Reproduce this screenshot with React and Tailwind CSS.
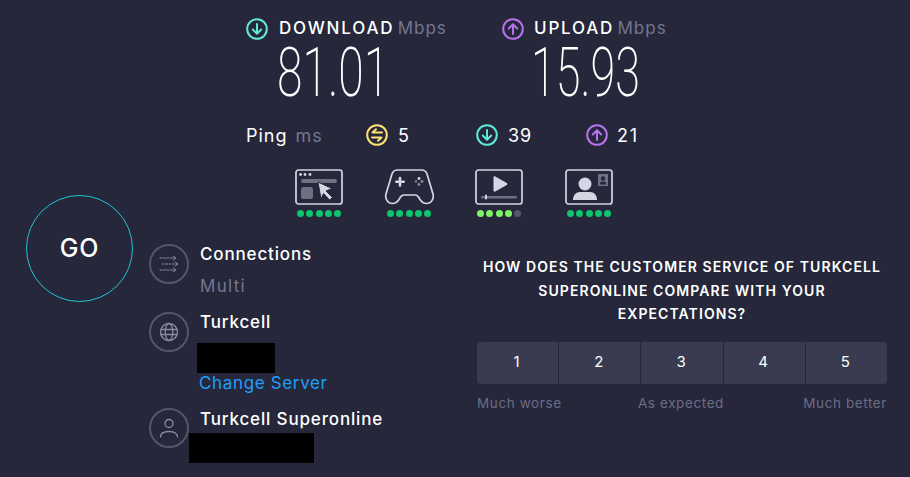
function ArrowCircle({ up, color, size = 22 }) {
	return (
		<svg width={size} height={size} viewBox="0 0 22 22" fill="none" stroke={color} strokeWidth="2" strokeLinecap="round" strokeLinejoin="round" className="shrink-0">
			<circle cx="11" cy="11" r="9.8" />
			{up ? <path d="M11 16V6.5M6.8 10.5 11 6.3l4.2 4.2" /> : <path d="M11 6v9.5M6.8 11.5l4.2 4.2 4.2-4.2" />}
		</svg>
	)
}

function PingIcon() {
	return (
		<svg width="22" height="22" viewBox="0 0 22 22" fill="none" stroke="#fde272" strokeWidth="2" strokeLinecap="round" strokeLinejoin="round" className="shrink-0">
			<circle cx="11" cy="11" r="9.8" />
			<path d="M16 8.5H6.5L10 5.2M6 13.5h9.5L12 16.8" />
		</svg>
	)
}

function WebIcon() {
	return (
		<svg width="48" height="36" viewBox="0 0 48 36" fill="none">
			<rect x="1" y="1" width="46" height="34" rx="2.5" stroke="#d5d6e4" strokeWidth="1.7" />
			<circle cx="5.5" cy="5.5" r="1.4" fill="#d5d6e4" />
			<circle cx="10" cy="5.5" r="1.4" fill="#d5d6e4" />
			<circle cx="15" cy="5.5" r="1.4" fill="#d5d6e4" />
			<rect x="6" y="10" width="36" height="4" rx="2" fill="#6f7082" />
			<rect x="6" y="18" width="12" height="12" rx="2.5" fill="#6f7082" />
			<path d="M23 13 37 19.500 31 22l6.500 6.500-3 2.500-6-6.500L26 30z" fill="#d5d6e4" stroke="#26273b" strokeWidth="1" />
		</svg>
	)
}

function GameIcon() {
	return (
		<svg width="50" height="36" viewBox="0 0 50 36" fill="none">
			<path d="M12.500 1h25c2.800 0 4.700 1.500 5.500 4l6 20c1.300 5-2 9.500-6.500 9.500-3 0-4.800-1.500-6.500-4l-1.500-2.500c-1-1.500-2-2-3.500-2h-11c-1.500 0-2.500.5-3.500 2l-1.500 2.500c-1.700 2.500-3.500 4-6.500 4-4.500 0-7.800-4.500-6.500-9.500l6-20c.8-2.500 2.700-4 5.500-4z" stroke="#d5d6e4" strokeWidth="1.7" />
			<path d="M16 9v7.500M12.300 12.700h7.400" stroke="#d5d6e4" strokeWidth="2.600" strokeLinecap="round" />
			<circle cx="35" cy="9.500" r="1.400" fill="#d5d6e4" />
			<circle cx="35" cy="15.500" r="1.400" fill="#8b8c9e" />
			<circle cx="32" cy="12.500" r="1.400" fill="#6f7082" />
			<circle cx="38" cy="12.500" r="1.400" fill="#8b8c9e" />
		</svg>
	)
}

function VideoIcon() {
	return (
		<svg width="48" height="36" viewBox="0 0 48 36" fill="none">
			<rect x="1" y="1" width="46" height="34" rx="2.500" stroke="#d5d6e4" strokeWidth="1.700" />
			<path d="M18.500 8.500c0-1 1-1.500 1.800-1l11.500 6.500c.8.500.8 1.500 0 2l-11.500 6.500c-.8.500-1.800 0-1.800-1z" fill="#d5d6e4" />
			<rect x="6" y="27" width="36" height="2.400" rx="1.200" fill="#6f7082" />
			<rect x="10" y="25.500" width="2" height="5" rx="1" fill="#d5d6e4" />
		</svg>
	)
}

function ContactIcon() {
	return (
		<svg width="48" height="36" viewBox="0 0 48 36" fill="none">
			<rect x="1" y="1" width="46" height="34" rx="2.500" stroke="#d5d6e4" strokeWidth="1.700" />
			<circle cx="20" cy="15" r="6.500" fill="#d5d6e4" />
			<path d="M8 31c0-5 3-8 7-8h10c4 0 7 3 7 8z" fill="#d5d6e4" />
			<rect x="33" y="5" width="10" height="12" fill="#6f7082" />
			<circle cx="38" cy="9.500" r="2.200" fill="#26273b" />
			<path d="M34.500 15.500c0-2 1.500-3 3.500-3s3.500 1 3.500 3z" fill="#26273b" />
		</svg>
	)
}

function Dots({ on = 5, color = 'bg-[#0cc66e]' }) {
	return (
		<div className="mt-[5px] flex justify-center gap-[2.300px]">
			{[0, 1, 2, 3, 4].map(i => (
				<span key={i} className={`size-[7px] rounded-full ${i < on ? color : 'bg-[#555668]'}`} />
			))}
		</div>
	)
}

function InfoCircle({ children }) {
	return (
		<div className="flex size-[40px] shrink-0 items-center justify-center rounded-full border-2 border-[#55566a]">
			{children}
		</div>
	)
}

const title = 'text-[17px] leading-[22px] font-medium tracking-[0.85px] text-white'

export default function App() {
	return (
		<div className="flex h-[477px] w-[910px] overflow-hidden bg-[#26273b] font-['Inter','Liberation_Sans',sans-serif] text-white">
			<div className="w-[149px] shrink-0 pt-[195px] pl-[26px]">
				<div className="flex size-[107px] items-center justify-center rounded-full border border-[#1fc5d3] text-[25px] font-medium tracking-[0.8px]">GO</div>
			</div>

			<div className="flex-1">
				<div className="flex pt-[17px] pl-[97px]">
					<div className="w-[256px]">
						<div className="flex h-[24px] items-center gap-[11px]">
							<ArrowCircle color="#5fe9d8" />
							<span className="text-[17px] font-medium tracking-[1.8px]">DOWNLOAD <span className="-ml-[3px] font-normal tracking-[1px] text-[#74768f]">Mbps</span></span>
						</div>
						<div className="ml-[31px] h-[64px] w-[106px] origin-top-left scale-x-[0.68] font-['Roboto',sans-serif] text-[68px] leading-[64px] font-extralight whitespace-nowrap">81.01</div>
					</div>
					<div>
						<div className="flex h-[24px] items-center gap-[10px]">
							<ArrowCircle up color="#b772ee" />
							<span className="text-[17px] font-medium tracking-[1.8px]">UPLOAD <span className="-ml-[3px] font-normal tracking-[1px] text-[#74768f]">Mbps</span></span>
						</div>
						<div className="ml-[29px] h-[64px] w-[106px] origin-top-left scale-x-[0.66] font-['Roboto',sans-serif] text-[68px] leading-[64px] font-extralight whitespace-nowrap">15.93</div>
					</div>
				</div>

				<div className="mt-[18px] flex h-[24px] items-center pl-[97px] text-[18px] tracking-[1px]">
					<span className="w-[120px]">Ping <span className="ml-[2px] text-[#74768f]">ms</span></span>
					<PingIcon />
					<span className="ml-[10px] w-[78px]">5</span>
					<ArrowCircle color="#5fe9d8" />
					<span className="ml-[10px] w-[78px]">39</span>
					<ArrowCircle up color="#b772ee" />
					<span className="ml-[9px] tracking-[1.8px]">21</span>
				</div>

				<div className="mt-[22px] flex pl-[146px]">
					<div className="w-[89px]"><div className="w-[48px]"><WebIcon /><Dots /></div></div>
					<div className="w-[91px]"><div className="w-[50px]"><GameIcon /><Dots /></div></div>
					<div className="w-[90px]"><div className="w-[48px]"><VideoIcon /><Dots on={4} color="bg-[#7cf562]" /></div></div>
					<div className="w-[48px]"><ContactIcon /><Dots /></div>
				</div>

				<div className="mt-[27px] flex">
					<div className="w-[328px] shrink-0">
						<div className="flex h-[68px] gap-[11px]">
							<InfoCircle>
								<svg width="20" height="16" viewBox="0 0 20 16" fill="none" stroke="#8b8c9e" strokeWidth="1" strokeLinecap="round" strokeLinejoin="round">
									<path d="M1 2h15" strokeDasharray="2 1.500" /><path d="M14 0l3 2-3 2" />
									<path d="M3 8h15" strokeDasharray="2 1.500" /><path d="M16 6l3 2-3 2" />
									<path d="M1 14h15" strokeDasharray="2 1.500" /><path d="M14 12l3 2-3 2" />
								</svg>
							</InfoCircle>
							<div className="-mt-[1px]">
								<div className={title}>Connections</div>
								<div className="mt-[10px] text-[17px] leading-[22px] tracking-[1.3px] text-[#74768f]">Multi</div>
							</div>
						</div>
						<div className="flex h-[96px] gap-[11px]">
							<InfoCircle>
								<svg width="20" height="20" viewBox="0 0 20 20" fill="none" stroke="#8b8c9e" strokeWidth="1.300">
									<circle cx="10" cy="10" r="8.500" />
									<ellipse cx="10" cy="10" rx="3.800" ry="8.500" />
									<path d="M1.500 7.500h17M1.500 12.500h17" />
								</svg>
							</InfoCircle>
							<div className="-mt-[1px]">
								<div className={title}>Turkcell</div>
								<div className="mt-[10px] -ml-[3px] h-[30px] w-[78px] bg-black" />
								<div className="mt-[-1px] -ml-[1px] text-[17px] leading-[22px] tracking-[0.65px] text-[#1f9ffb]">Change Server</div>
							</div>
						</div>
						<div className="flex gap-[11px]">
							<InfoCircle>
								<svg width="20" height="20" viewBox="0 0 20 20" fill="none" stroke="#8b8c9e" strokeWidth="1.300" strokeLinecap="round">
									<circle cx="10" cy="5.500" r="4" />
									<path d="M1.500 19c0-3.500 3-5.500 8.500-5.500s8.500 2 8.500 5.500" />
								</svg>
							</InfoCircle>
							<div>
								<div className={title}>Turkcell Superonline</div>
								<div className="mt-[3px] -ml-[11px] h-[30px] w-[125px] bg-black" />
							</div>
						</div>
					</div>

					<div className="w-[410px] shrink-0 pt-[11px]">
						<div className="text-center text-[14px] leading-[23.500px] font-semibold tracking-[1.08px] uppercase">
							How does the customer service of Turkcell<br />Superonline compare with your<br />expectations?
						</div>
						<div className="mt-[16px] flex h-[42px] gap-[1px] overflow-hidden rounded-[4px]">
							{[1, 2, 3, 4, 5].map(n => (
								<div key={n} className="flex flex-1 items-center justify-center bg-[#3a3b50] pr-[2px] text-[15px]">{n}</div>
							))}
						</div>
						<div className="mt-[9px] flex justify-between text-[13.500px] leading-[20px] tracking-[0.6px] text-[#6b6d85]">
							<span>Much worse</span>
							<span className="-ml-[3px]">As expected</span>
							<span>Much better</span>
						</div>
					</div>
				</div>
			</div>
		</div>
	)
}
